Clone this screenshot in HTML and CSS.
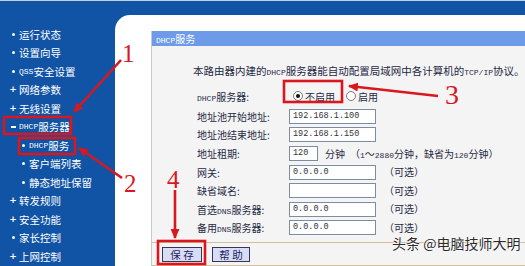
FILE: index.html
```html
<!DOCTYPE html>
<html lang="zh-CN">
<head>
<meta charset="utf-8">
<title>DHCP服务</title>
<link rel="stylesheet" href="styles.css">
</head>
<body>
<div class="page">
  <nav class="side">
    <div class="item"><span class="b dot"></span>运行状态</div>
    <div class="item"><span class="b dot"></span>设置向导</div>
    <div class="item"><span class="b dot"></span><span class="a">QSS</span>安全设置</div>
    <div class="item"><span class="b plus">+</span>网络参数</div>
    <div class="item"><span class="b plus">+</span>无线设置</div>
    <div class="item"><span class="b minus"></span><span class="a">DHCP</span>服务器</div>
    <div class="item sub"><span class="b dot"></span><span class="a">DHCP</span>服务</div>
    <div class="item sub"><span class="b dot"></span>客户端列表</div>
    <div class="item sub"><span class="b dot"></span>静态地址保留</div>
    <div class="item"><span class="b plus">+</span>转发规则</div>
    <div class="item"><span class="b plus">+</span>安全功能</div>
    <div class="item"><span class="b dot"></span>家长控制</div>
    <div class="item"><span class="b plus">+</span>上网控制</div>
  </nav>
  <main class="content">
    <section class="panel">
      <div class="panel-head"><span class="a">DHCP</span>服务</div>
      <div class="panel-body">
        <p class="desc">本路由器内建的<span class="a">DHCP</span>服务器能自动配置局域网中各计算机的<span class="a">TCP/IP</span>协议。</p>
        <div class="form">
          <div class="row row-first">
            <span class="label"><span class="a">DHCP</span>服务器:</span>
            <span class="radio on"></span><span class="rtext">不启用</span>
            <span class="radio second"></span><span class="rtext">启用</span>
          </div>
          <div class="row"><span class="label">地址池开始地址:</span><span class="input">192.168.1.100</span></div>
          <div class="row"><span class="label">地址池结束地址:</span><span class="input">192.168.1.150</span></div>
          <div class="row"><span class="label">地址租期:</span><span class="input short">120</span><span class="unit">分钟</span><span class="note">（<span class="a">1</span>～<span class="a">2880</span>分钟，缺省为<span class="a">120</span>分钟）</span></div>
          <div class="row"><span class="label">网关:</span><span class="input">0.0.0.0</span><span class="opt">（可选）</span></div>
          <div class="row"><span class="label">缺省域名:</span><span class="input"></span><span class="opt">（可选）</span></div>
          <div class="row"><span class="label">首选<span class="a">DNS</span>服务器:</span><span class="input">0.0.0.0</span><span class="opt">（可选）</span></div>
          <div class="row"><span class="label">备用<span class="a">DNS</span>服务器:</span><span class="input">0.0.0.0</span><span class="opt">（可选）</span></div>
        </div>
      </div>
      <div class="panel-foot">
        <span class="btn">保 存</span>
        <span class="btn">帮 助</span>
      </div>
    </section>
  </main>
</div>

<svg class="annot" width="525" height="266" viewBox="0 0 525 266" xmlns="http://www.w3.org/2000/svg">
  <defs>
    <marker id="ah" markerUnits="userSpaceOnUse" markerWidth="10" markerHeight="9" refX="9" refY="4.5" orient="auto">
      <path d="M0,0 L10,4.5 L0,9 Z" fill="#d8171f"/>
    </marker>
  </defs>
  <g fill="none" stroke="#d8171f" stroke-width="2.6">
    <rect x="4" y="117" width="67" height="17"/>
    <rect x="19" y="138" width="56" height="16"/>
    <rect x="284" y="81" width="58" height="21"/>
    <rect x="158" y="241" width="47" height="23"/>
    <line x1="121" y1="60" x2="74" y2="112" marker-end="url(#ah)"/>
    <line x1="122" y1="178" x2="79" y2="148" marker-end="url(#ah)"/>
    <line x1="438" y1="96" x2="349" y2="86" marker-end="url(#ah)"/>
    <line x1="175" y1="190" x2="175" y2="238" marker-end="url(#ah)"/>
  </g>
  <g fill="#d8171f" font-family="'Liberation Serif', serif" font-size="25">
    <text x="122" y="62">1</text>
    <text x="124" y="192">2</text>
    <text x="445" y="104" font-size="28">3</text>
    <text x="167" y="188">4</text>
  </g>
</svg>

<div class="watermark">头条 @电脑技师大明</div>
</body>
</html>
```
FILE: styles.css
```css
* {
  box-sizing: border-box;
  margin: 0;
  padding: 0;
}

html, body {
  width: 525px;
  height: 266px;
  overflow: hidden;
}

body {
  position: relative;
  background: #1153a4;
  font-family: "Noto Sans CJK SC", "Noto Sans", sans-serif;
}

.a {
  font-family: "Liberation Mono", monospace;
  font-size: 8px;
}

.page {
  display: grid;
  grid-template-columns: 115px 1fr;
  height: 266px;
  padding-top: 14px;
  border-top: 1px solid #c3d0e4;
}

/* sidebar */
.side {
  padding-top: 10px;
  color: #ffffff;
  font-size: 10.5px;
}

.item {
  display: flex;
  align-items: center;
  height: 18.5px;
  padding-left: 9px;
  white-space: nowrap;
}

.item.sub {
  padding-left: 19px;
}

.b {
  display: flex;
  justify-content: center;
  align-items: center;
  width: 8px;
  margin-right: 2px;
}

.b.dot::before {
  content: "";
  width: 3px;
  height: 3px;
  border-radius: 50%;
  background: #ffffff;
}

.b.plus {
  font-family: "DejaVu Sans", sans-serif;
  font-size: 9px;
  font-weight: bold;
  line-height: 1;
}

.b.minus::before {
  content: "";
  width: 5px;
  height: 2px;
  background: #ffffff;
}

/* content */
.content {
  background: #ffffff;
  border-top-left-radius: 15px;
  padding: 16px 0 0 36px;
}

.panel {
  display: flex;
  flex-direction: column;
  height: 235px;
  background: #f4f4f4;
  border-left: 1px solid #c8c8c8;
}

.panel-head {
  height: 15px;
  line-height: 15px;
  padding-left: 4px;
  background: #6d9be8;
  color: #ffffff;
  font-size: 10px;
  white-space: nowrap;
}

.panel-body {
  height: 196px;
  padding: 17px 0 0 41px;
  color: #1f2945;
}

.desc {
  font-size: 10.5px;
  line-height: 16px;
  white-space: nowrap;
}

.form {
  margin-top: 4px;
  margin-left: 4px;
  display: flex;
  flex-direction: column;
  font-size: 10px;
}

.row {
  display: flex;
  align-items: center;
  height: 18.6px;
  white-space: nowrap;
}

.row-first {
  height: 22px;
}

.label {
  width: 92px;
  flex: none;
}

.input {
  width: 87px;
  height: 15px;
  flex: none;
  padding-left: 3px;
  background: #ffffff;
  border: 1px solid #7b8ca3;
  font-family: "Liberation Mono", monospace;
  font-size: 8.5px;
  line-height: 13px;
  color: #333333;
}

.input.short {
  width: 29px;
}

.unit {
  margin-left: 7px;
}

.note {
  margin-left: 5px;
}

.opt {
  margin-left: 8px;
  line-height: 12px;
}

.radio {
  width: 10px;
  height: 10px;
  flex: none;
  margin-left: 4px;
  border-radius: 50%;
  border: 1px solid #7b7b7b;
  background: #ffffff;
  display: flex;
  justify-content: center;
  align-items: center;
}

.radio.on::before {
  content: "";
  width: 4px;
  height: 4px;
  border-radius: 50%;
  background: #111111;
}

.radio.second {
  margin-left: 11px;
}

.rtext {
  margin-left: 2px;
}

.panel-foot {
  height: 24px;
  display: flex;
  align-items: flex-start;
  gap: 10px;
  padding: 4px 0 0 10px;
  border-top: 1px solid #d5be98;
  border-bottom: 1px solid #d5be98;
}

.btn {
  width: 40px;
  height: 15px;
  line-height: 13px;
  text-align: center;
  font-size: 10.5px;
  color: #1b1f5e;
  background: #d9dcf5;
  border: 1px solid #34365a;
}

.btn + .btn {
  width: 38px;
}

/* overlays */
.annot {
  position: absolute;
  left: 0;
  top: 0;
  pointer-events: none;
}

.watermark {
  position: absolute;
  left: 392px;
  top: 236px;
  font-size: 14px;
  line-height: 14px;
  color: #2b2b2b;
  white-space: nowrap;
  text-shadow: 0 0 2px #ffffff, 0 0 2px #ffffff, 0 0 1px #ffffff;
}
```
